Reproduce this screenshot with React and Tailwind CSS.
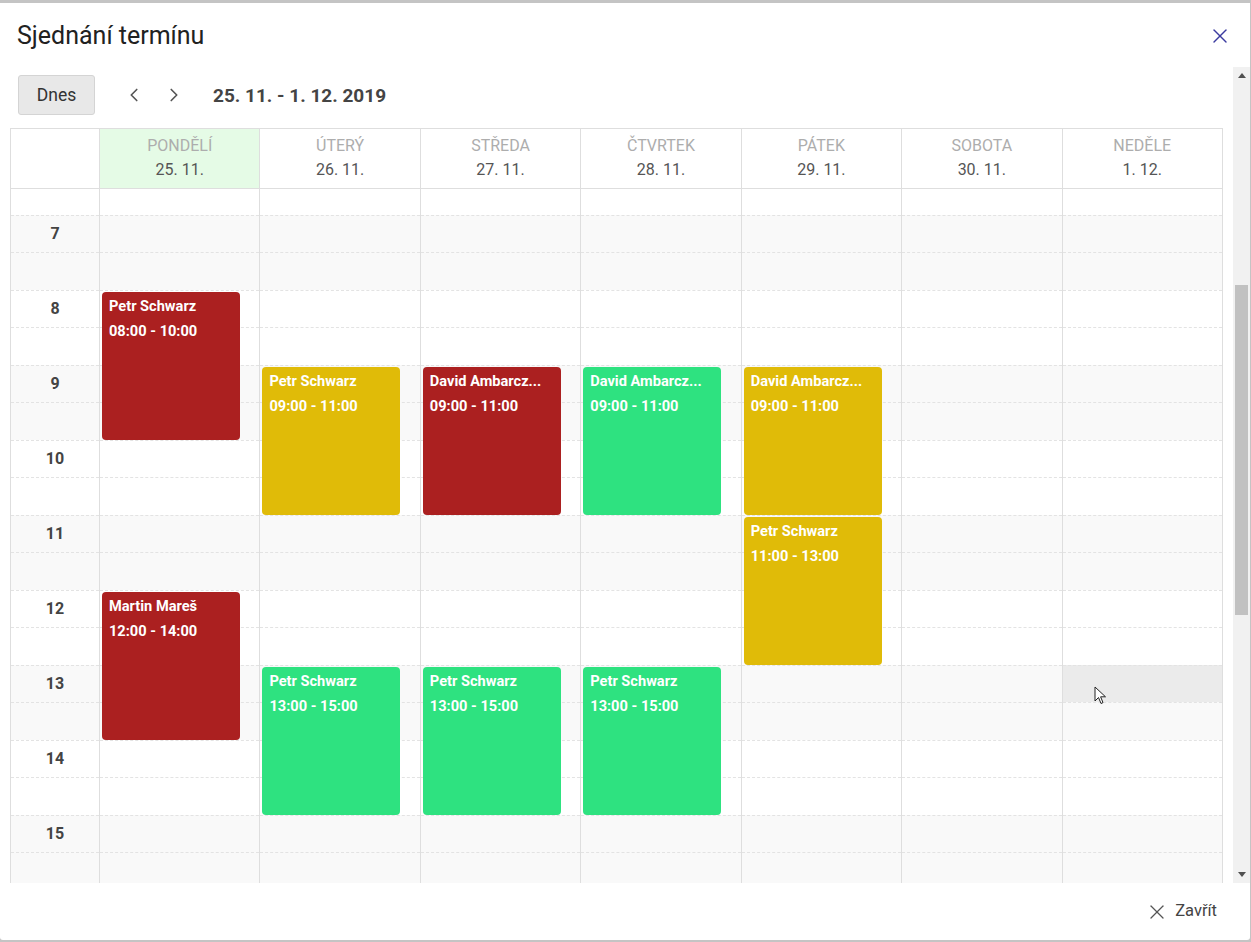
import React from 'react';
import { ChevronLeft, ChevronRight, X } from 'lucide-react';

const days = [
    { name: 'Pondělí', date: '25. 11.', today: true },
    { name: 'Úterý', date: '26. 11.' },
    { name: 'Středa', date: '27. 11.' },
    { name: 'Čtvrtek', date: '28. 11.' },
    { name: 'Pátek', date: '29. 11.' },
    { name: 'Sobota', date: '30. 11.' },
    { name: 'Neděle', date: '1. 12.' },
];

const hours = [7, 8, 9, 10, 11, 12, 13, 14, 15];

const colors = {
    red: 'bg-[#ab2020]',
    yellow: 'bg-[#e0bb08]',
    green: 'bg-[#2ee280]',
};

const events = [
    { day: 0, from: 8, to: 10, who: 'Petr Schwarz', color: 'red' },
    { day: 0, from: 12, to: 14, who: 'Martin Mareš', color: 'red' },
    { day: 1, from: 9, to: 11, who: 'Petr Schwarz', color: 'yellow' },
    { day: 1, from: 13, to: 15, who: 'Petr Schwarz', color: 'green' },
    { day: 2, from: 9, to: 11, who: 'David Ambarcz...', color: 'red' },
    { day: 2, from: 13, to: 15, who: 'Petr Schwarz', color: 'green' },
    { day: 3, from: 9, to: 11, who: 'David Ambarcz...', color: 'green' },
    { day: 3, from: 13, to: 15, who: 'Petr Schwarz', color: 'green' },
    { day: 4, from: 9, to: 11, who: 'David Ambarcz...', color: 'yellow' },
    { day: 4, from: 11, to: 13, who: 'Petr Schwarz', color: 'yellow' },
];

const HOUR = 75;
const TOP = 26;
const pad = (n) => String(n).padStart(2, '0') + ':00';

function HourRows({ hover }) {
    return (
        <>
            <div className="h-[26px]" />
            {hours.map(h => (
                <div key={h} className={h % 2 ? 'bg-[#f9f9f9]' : 'bg-white'}>
                    <div className={`h-[37px] border-t border-dashed border-[#e3e3e3] ${hover === h ? 'bg-[#ebebeb]' : ''}`} />
                    <div className="h-[38px] border-t border-dashed border-[#e3e3e3]" />
                </div>
            ))}
        </>
    );
}

function EventCard({ ev }) {
    return (
        <div
            className={`absolute left-[2px] w-[138px] rounded-[4px] px-[7px] pt-[2px] text-white text-[14.6px] font-bold leading-[25px] ${colors[ev.color]}`}
            style={{ top: TOP + (ev.from - 7) * HOUR + 2, height: (ev.to - ev.from) * HOUR - 2 }}
        >
            <div className="truncate">{ev.who}</div>
            <div>{pad(ev.from)} - {pad(ev.to)}</div>
        </div>
    );
}

function Cursor() {
    return (
        <svg className="absolute left-[31px] top-[497px]" width="13" height="20" viewBox="0 0 13 20">
            <path d="M1 1 L1 15 L4.5 11.5 L7 17.5 L9 16.6 L6.6 10.8 L11.5 10.8 Z" fill="white" stroke="#222" strokeWidth="1" strokeLinejoin="round" />
        </svg>
    );
}

export default function App() {
    return (
        <div className="h-screen w-full bg-[#c4c4c4] pt-[3px]" style={{ fontFamily: 'Roboto, "Noto Sans", sans-serif' }}>
            <div className="h-[937px] w-[1250px] bg-white rounded-b-[3px] flex flex-col overflow-hidden">
                {/* title */}
                <div className="h-[64px] pt-[2px] flex items-center justify-between pl-[17px] pr-[18px] shrink-0">
                    <h2 className="text-[25px] text-[#212121]">Sjednání termínu</h2>
                    <X size={24} strokeWidth={1.4} className="text-[#3b3ba0]" />
                </div>

                {/* scroll area */}
                <div className="h-[816px] flex shrink-0">
                    <div className="flex-1 overflow-hidden pl-[10px] pr-[10px]">
                        <div className="flex items-center mt-[8px] mb-[13px] pl-[8px]">
                            <button className="w-[77px] h-[40px] rounded-[3px] bg-[#e8e8e8] border border-[#d4d4d4] text-[17.5px] text-[#333]">
                                Dnes
                            </button>
                            <ChevronLeft size={22} strokeWidth={1.8} className="ml-[28px] text-[#555]" />
                            <ChevronRight size={22} strokeWidth={1.8} className="ml-[18px] text-[#555]" />
                            <span className="ml-[28px] text-[19px] font-bold text-[#444] pt-[2px]">25. 11. - 1. 12. 2019</span>
                        </div>

                        <div className="border-l border-r border-[#dedede]">
                            {/* header */}
                            <div className="flex h-[61px] border-t border-b border-[#dedede]">
                                <div className="w-[88px] shrink-0" />
                                {days.map(d => (
                                    <div key={d.name} className={`flex-1 border-l border-[#dedede] flex flex-col items-center justify-center text-[16px] leading-6 pb-[2px] ${d.today ? 'bg-[#e5fbe6]' : ''}`}>
                                        <span className="uppercase text-[#adadad]">{d.name}</span>
                                        <span className="text-[#555]">{d.date}</span>
                                    </div>
                                ))}
                            </div>

                            {/* body */}
                            <div className="flex">
                                <div className="w-[88px] shrink-0">
                                    <div className="h-[26px]" />
                                    {hours.map(h => (
                                        <div key={h} className={h % 2 ? 'bg-[#f9f9f9]' : 'bg-white'}>
                                            <div className="h-[37px] border-t border-dashed border-[#e3e3e3] flex items-center justify-center text-[16px] font-bold text-[#444]">{h}</div>
                                            <div className="h-[38px] border-t border-dashed border-[#e3e3e3]" />
                                        </div>
                                    ))}
                                </div>
                                {days.map((d, i) => (
                                    <div key={d.name} className="flex-1 border-l border-[#dedede] relative">
                                        <HourRows hover={i === 6 ? 13 : null} />
                                        {events.filter(e => e.day === i).map((ev, k) => (
                                            <EventCard key={k} ev={ev} />
                                        ))}
                                        {i === 6 && <Cursor />}
                                    </div>
                                ))}
                            </div>
                        </div>
                    </div>

                    {/* scrollbar */}
                    <div className="w-[17px] bg-[#f1f1f1] flex flex-col shrink-0">
                        <div className="h-[17px] flex items-center justify-center">
                            <svg width="8" height="5" viewBox="0 0 8 5"><path d="M0 5 L4 0 L8 5 Z" fill="#505050" /></svg>
                        </div>
                        <div className="mt-[201px] mx-[2px] h-[330px] bg-[#c1c1c1]" />
                        <div className="flex-1" />
                        <div className="h-[17px] flex items-center justify-center">
                            <svg width="8" height="5" viewBox="0 0 8 5"><path d="M0 0 L8 0 L4 5 Z" fill="#505050" /></svg>
                        </div>
                    </div>
                </div>

                {/* footer */}
                <div className="flex-1 flex items-center justify-end pr-[33px]">
                    <button className="flex items-center gap-[6px] text-[16.5px] text-[#444]">
                        <X size={24} strokeWidth={1.3} className="text-[#555]" />
                        Zavřít
                    </button>
                </div>
            </div>
        </div>
    );
}
